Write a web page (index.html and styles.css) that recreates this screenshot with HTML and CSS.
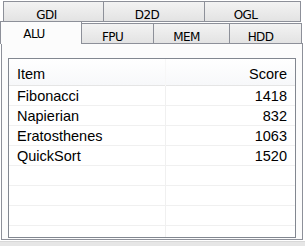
FILE: index.html
```html
<!DOCTYPE html>
<html lang="en">
<head>
    <meta charset="UTF-8">
    <title>Benchmark</title>
    <link rel="stylesheet" href="styles.css">
</head>
<body>
    <div class="tabs">
        <div class="tab-row back">
            <div class="tab">GDI</div>
            <div class="tab">D2D</div>
            <div class="tab">OGL</div>
        </div>
        <div class="tab-row front">
            <div class="tab active">ALU</div>
            <div class="tab">FPU</div>
            <div class="tab">MEM</div>
            <div class="tab">HDD</div>
        </div>
    </div>

    <div class="panel">
        <div class="list">
            <div class="row head">
                <div class="cell">Item</div>
                <div class="cell num">Score</div>
            </div>
            <div class="row">
                <div class="cell">Fibonacci</div>
                <div class="cell num">1418</div>
            </div>
            <div class="row">
                <div class="cell">Napierian</div>
                <div class="cell num">832</div>
            </div>
            <div class="row">
                <div class="cell">Eratosthenes</div>
                <div class="cell num">1063</div>
            </div>
            <div class="row">
                <div class="cell">QuickSort</div>
                <div class="cell num">1520</div>
            </div>
            <div class="row"><div class="cell"></div><div class="cell num"></div></div>
            <div class="row"><div class="cell"></div><div class="cell num"></div></div>
            <div class="row"><div class="cell"></div><div class="cell num"></div></div>
            <div class="row"><div class="cell"></div><div class="cell num"></div></div>
        </div>
    </div>

    <div class="statusbar"></div>
</body>
</html>
```

FILE: styles.css
```css
body {
    margin: 0;
    background: #fff;
    font-family: 'Liberation Sans', Arial, sans-serif;
    color: #000;
    width: 305px;
    height: 246px;
    overflow: hidden;
}
.tabs {
    font-family: 'DejaVu Sans', Tahoma, sans-serif;
    font-size: 12px;
    letter-spacing: -0.6px;
}
.tab-row {
    display: grid;
}
.tab-row.back {
    margin: 1px 0 0 3px;
    grid-template-columns: 100px 101px 97px;
}
.tab-row.front {
    grid-template-columns: 81px 72px 76px 73px;
    height: 21px;
}
.tab {
    box-sizing: border-box;
    border: 1px solid #8d9099;
    background: linear-gradient(#f3f3f3, #e3e3e3);
    text-align: center;
    margin-right: -1px;
    color: #000;
}
.tab:last-child {
    margin-right: 0;
}
.back .tab {
    height: 21px;
    padding: 7px 14px 0 0;
    line-height: 12px;
}
.front .tab {
    margin-top: 1px;
    height: 20px;
    border-bottom: none;
    padding: 7px 10px 0 0;
    line-height: 12px;
}
.front .tab.active {
    position: relative;
    z-index: 1;
    margin-top: -1px;
    height: 23px;
    background: #fcfcfc;
    padding: 6px 14px 0 0;
}
.panel {
    box-sizing: border-box;
    margin-left: 1px;
    width: 302px;
    height: 197px;
    border: 1px solid #8d9099;
    background: #fcfcfc;
    padding: 14px 6px 1px 6px;
}
.list {
    box-sizing: border-box;
    height: 180px;
    border: 1px solid #828790;
    background: #fff;
    overflow: hidden;
    font-size: 14.5px;
}
.row {
    display: grid;
    grid-template-columns: 157px 1fr;
    height: 20px;
    box-sizing: border-box;
    border-bottom: 1px solid #f0f0f0;
    line-height: 19px;
}
.row .cell {
    padding-top: 1px;
}
.row .cell:first-child {
    border-right: 1px solid #f0f0f0;
    padding-left: 8px;
}
.cell.num {
    text-align: right;
    padding-right: 8px;
}
.row.head {
    height: 27px;
    line-height: 27px;
    background: linear-gradient(#ffffff, #f7f8fa);
    border-bottom: 1px solid #e5e5e5;
}
.row.head .cell {
    padding-top: 2px;
}
.row.head .cell:first-child {
    border-right: 1px solid #f7f7f7;
}
.statusbar {
    margin-top: 1px;
    height: 6px;
    background: #e6e6e6;
    border-top: 1px solid #d8d8d8;
}
```
